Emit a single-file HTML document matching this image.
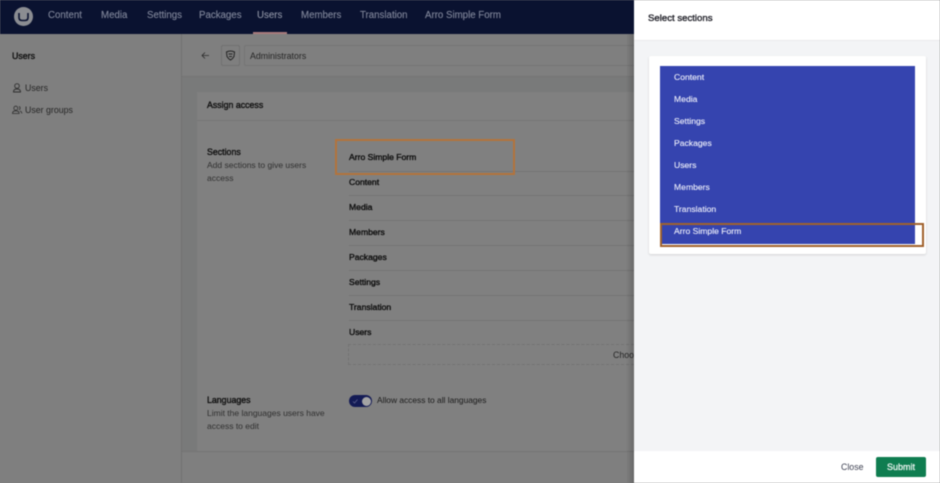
<!DOCTYPE html>
<html><head><meta charset="utf-8"><style>
*{box-sizing:border-box}
html,body{margin:0;padding:0;width:940px;height:483px;overflow:hidden;background:#7f7f7f;font-family:"Liberation Sans",sans-serif}
.t{position:absolute;white-space:nowrap;font-size:8.6px;line-height:12px;color:#161616}
.a{position:absolute}
.nav{color:#7d8397;font-size:9.7px;top:10px;-webkit-text-stroke:.15px #7d8397}
.side{color:#262626;font-size:8.8px}
.h{font-size:8.8px;color:#101010;-webkit-text-stroke:.35px #101010}
.row{left:349px;color:#0e0e0e;font-size:8.6px;-webkit-text-stroke:.35px #0e0e0e}
.line{position:absolute;left:349px;width:285px;height:1px;background:#747474}
.sec{left:674px;color:#eceefa;font-size:8.6px;-webkit-text-stroke:.12px #eceefa}
.d{color:#303030;font-size:8.5px;line-height:13px;white-space:normal}
#blur{position:absolute;inset:0;filter:blur(.45px)}
</style></head><body><div id="blur">
<div class="a" style="left:0;top:0;width:634px;height:34px;background:#0a1230"></div>
<div class="a" style="left:14px;top:7px;width:19px;height:19px;border-radius:50%;background:#8b8d92"></div>
<svg class="a" style="left:14px;top:7px" width="19" height="19"><path d="M5 6v4.5q0 3 3 3h3q3 0 3-3V6" fill="none" stroke="#0a1230" stroke-width="1.6"/></svg>
<div class="t nav" style="left:48px">Content</div>
<div class="t nav" style="left:101px">Media</div>
<div class="t nav" style="left:147px">Settings</div>
<div class="t nav" style="left:199px">Packages</div>
<div class="t nav" style="left:257px;color:#8f94a4">Users</div>
<div class="a" style="left:253px;top:32px;width:34px;height:2px;background:#a87a7c"></div>
<div class="t nav" style="left:301px">Members</div>
<div class="t nav" style="left:360px">Translation</div>
<div class="t nav" style="left:425px">Arro Simple Form</div>

<div class="a" style="left:181px;top:34px;width:1px;height:449px;background:#727272"></div>
<div class="t h" style="left:12px;top:50px">Users</div>
<svg class="a" style="left:12px;top:82px" width="12" height="12" fill="none" stroke="#2e2e2e" stroke-width=".9"><circle cx="5" cy="4" r="2.3"/><path d="M1.5 10q0-3 3.5-3t3.5 3z"/></svg>
<div class="t side" style="left:25px;top:82px">Users</div>
<svg class="a" style="left:11px;top:104px" width="13" height="12" fill="none" stroke="#2e2e2e" stroke-width=".8"><circle cx="4.8" cy="4.2" r="2"/><path d="M1.5 9.5q0-2.7 3.3-2.7t3.3 2.7zM8 2.5a1.7 1.7 0 0 1 0 3.2M9 7q1.8.6 1.8 2.5"/></svg>
<div class="t side" style="left:25px;top:104px">User groups</div>

<div class="a" style="left:182px;top:34px;width:452px;height:43px;background:#7f7f7f;border-bottom:1px solid #747474"></div>
<div class="a" style="left:182px;top:77px;width:452px;height:374px;background:#797a7a"></div>
<div class="a" style="left:182px;top:451px;width:452px;height:32px;background:#7f7f7f;border-top:1px solid #747474"></div>
<svg class="a" style="left:201px;top:51px" width="9" height="9" fill="none" stroke="#2b2b2b" stroke-width=".8"><path d="M8 4.5H1M4 1.5l-3 3 3 3"/></svg>
<div class="a" style="left:221px;top:45px;width:19px;height:21px;border:1px solid #717171;border-radius:2px"></div>
<svg class="a" style="left:225px;top:50px" width="11" height="11" fill="none" stroke="#222" stroke-width="1"><path d="M1.5 2Q5.5 0 9.500 2L9 6.500Q7.500 9 5.500 10 3.500 9 2 6.500zM3.500 4h4M4 6.500h3"/></svg>
<div class="a" style="left:244px;top:45px;width:390px;height:21px;border:1px solid #757575;border-right:0;border-radius:2px 0 0 2px"></div>
<div class="t side" style="left:250px;top:50px">Administrators</div>

<div class="a" style="left:197px;top:92px;width:437px;height:359px;background:#808080"></div>
<div class="a" style="left:197px;top:120px;width:437px;height:1px;background:#767676"></div>
<div class="t h" style="left:207px;top:99px">Assign access</div>
<div class="t h" style="left:207px;top:146px">Sections</div>
<div class="t d" style="left:207px;top:159px;width:110px">Add sections to give users access</div>

<div class="t row" style="top:151px">Arro Simple Form</div>
<div class="line" style="top:171px"></div>
<div class="a" style="left:335px;top:139px;width:180px;height:36px;border:2px solid #b3733c"></div>
<div class="t row" style="top:176px">Content</div><div class="line" style="top:195px"></div>
<div class="t row" style="top:201px">Media</div><div class="line" style="top:220px"></div>
<div class="t row" style="top:226px">Members</div><div class="line" style="top:245px"></div>
<div class="t row" style="top:251px">Packages</div><div class="line" style="top:270px"></div>
<div class="t row" style="top:276px">Settings</div><div class="line" style="top:295px"></div>
<div class="t row" style="top:301px">Translation</div><div class="line" style="top:320px"></div>
<div class="t row" style="top:326px">Users</div>
<div class="a" style="left:348px;top:344px;width:286px;height:21px;border:1px dashed #737373;border-right:0"></div>
<div class="t side" style="left:613px;top:349px">Choo</div>

<div class="t h" style="left:207px;top:394px">Languages</div>
<div class="t d" style="left:207px;top:407px;width:125px">Limit the languages users have access to edit</div>
<div class="a" style="left:349px;top:395px;width:23px;height:12px;border-radius:6px;background:#141b55"></div>
<div class="a" style="left:362px;top:396.5px;width:9px;height:9px;border-radius:50%;background:#a4a4a4"></div>
<svg class="a" style="left:352px;top:397px" width="7" height="8" fill="none" stroke="#5a608f" stroke-width=".8"><path d="M1 4.5l1.5 1.500 3-3.500"/></svg>
<div class="t" style="left:377px;top:394px;color:#1a1a1a;font-size:8.4px">Allow access to all languages</div>

<div class="a" style="left:626px;top:34px;width:8px;height:449px;background:linear-gradient(90deg,rgba(0,0,0,0),rgba(0,0,0,.18))"></div>

<div class="a" style="left:634px;top:0;width:306px;height:483px;background:#f3f4f6"></div>
<div class="a" style="left:634px;top:0;width:306px;height:41px;background:#fff;border-bottom:1px solid #e9e9eb"></div>
<div class="t" style="left:648px;top:13px;font-size:9.6px;color:#22222a;-webkit-text-stroke:.35px #22222a">Select sections</div>
<div class="a" style="left:649px;top:56px;width:277px;height:198px;background:#fff;border-radius:2px;box-shadow:0 1px 2px rgba(0,0,0,.14)"></div>
<div class="a" style="left:660px;top:66px;width:255px;height:178px;background:#3544af"></div>
<div class="t sec" style="top:71px">Content</div>
<div class="t sec" style="top:93px">Media</div>
<div class="t sec" style="top:115px">Settings</div>
<div class="t sec" style="top:137px">Packages</div>
<div class="t sec" style="top:159px">Users</div>
<div class="t sec" style="top:181px">Members</div>
<div class="t sec" style="top:203px">Translation</div>
<div class="t sec" style="top:225px">Arro Simple Form</div>
<div class="a" style="left:660px;top:223px;width:264px;height:24px;border:2px solid #a0622c"></div>

<div class="a" style="left:634px;top:451px;width:306px;height:32px;background:#fff"></div>
<div class="t" style="left:841px;top:461px;color:#3e4152;font-size:8.800px">Close</div>
<div class="a" style="left:876px;top:457px;width:50px;height:20px;background:#0f7d50;border-radius:2px"></div>
<div class="t" style="left:876px;top:461px;width:50px;text-align:center;color:#eef6f2;font-size:9px;-webkit-text-stroke:.3px #eef6f2">Submit</div>
</div></body></html>
